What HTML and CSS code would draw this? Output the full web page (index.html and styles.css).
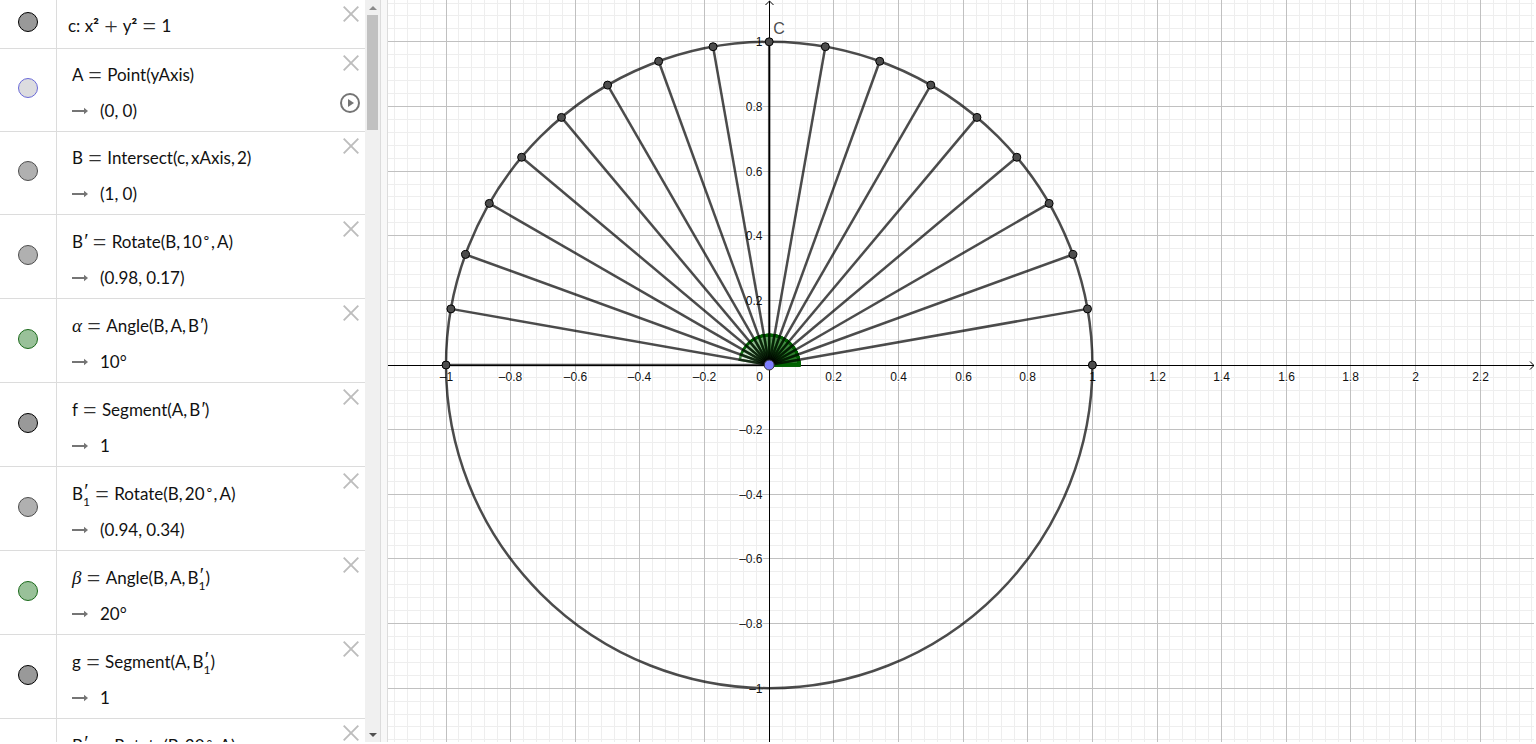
FILE: index.html
```html
<!DOCTYPE html>
<html lang="en">
<head>
<meta charset="utf-8">
<title>Circle and rotated points</title>
<link rel="stylesheet" href="styles.css">
</head>
<body>
<svg class="defs" aria-hidden="true">
  <symbol id="close" viewBox="0 0 16 16"><path d="M.7.7 15.3 15.3M15.3.7.7 15.3" fill="none" stroke="#bdbdbd" stroke-width="1.9"/></symbol>
  <symbol id="arrow" viewBox="0 0 16 8"><path d="M0 4H13" stroke="#757575" stroke-width="2"/><path d="M12 .8 16 4 12 7.2Z" fill="#757575"/></symbol>
</svg>
<div class="app">
  <aside class="algebra">
    <ul class="rows">
      <li class="row single">
        <div class="gutter"><button class="marble dark" aria-label="Show c"></button></div>
        <div class="content"><p class="plain">c: x<b class="square">²</b> <span class="op">+</span> y<b class="square">²</b> <span class="op">=</span> 1</p></div>
        <button class="close" aria-label="Delete c"><svg><use href="#close"/></svg></button>
      </li>
      <li class="row">
        <div class="gutter"><button class="marble blue" aria-label="Show A"></button></div>
        <div class="content"><p class="formula">A <span class="op">=</span> Point(yAxis)</p><p class="output"><svg class="arrow"><use href="#arrow"/></svg>(0, 0)</p></div>
        <button class="close" aria-label="Delete A"><svg><use href="#close"/></svg></button>
        <button class="play" aria-label="Play"><svg viewBox="0 0 20 20"><circle cx="10" cy="10" r="9" fill="none" stroke="#757575" stroke-width="2"/><path d="M8 6 14 10 8 14Z" fill="#757575"/></svg></button>
      </li>
      <li class="row">
        <div class="gutter"><button class="marble gray" aria-label="Show B"></button></div>
        <div class="content"><p class="formula">B <span class="op">=</span> Intersect(c,&thinsp;xAxis,&thinsp;2)</p><p class="output"><svg class="arrow"><use href="#arrow"/></svg>(1, 0)</p></div>
        <button class="close" aria-label="Delete B"><svg><use href="#close"/></svg></button>
      </li>
      <li class="row primed">
        <div class="gutter"><button class="marble gray" aria-label="Show B′"></button></div>
        <div class="content"><p class="formula">B<i class="prime">′</i> <span class="op">=</span> Rotate(B,&thinsp;10<i class="ring">∘</i>,&thinsp;A)</p><p class="output"><svg class="arrow"><use href="#arrow"/></svg>(0.98, 0.17)</p></div>
        <button class="close" aria-label="Delete B′"><svg><use href="#close"/></svg></button>
      </li>
      <li class="row primed">
        <div class="gutter"><button class="marble green" aria-label="Show α"></button></div>
        <div class="content"><p class="formula"><i class="greek">α</i> <span class="op">=</span> Angle(B,&thinsp;A,&thinsp;B<i class="prime">′</i>)</p><p class="output"><svg class="arrow"><use href="#arrow"/></svg>10°</p></div>
        <button class="close" aria-label="Delete α"><svg><use href="#close"/></svg></button>
      </li>
      <li class="row primed">
        <div class="gutter"><button class="marble dark" aria-label="Show f"></button></div>
        <div class="content"><p class="formula">f <span class="op">=</span> Segment(A,&thinsp;B<i class="prime">′</i>)</p><p class="output"><svg class="arrow"><use href="#arrow"/></svg>1</p></div>
        <button class="close" aria-label="Delete f"><svg><use href="#close"/></svg></button>
      </li>
      <li class="row primed">
        <div class="gutter"><button class="marble gray" aria-label="Show B′1"></button></div>
        <div class="content"><p class="formula">B<span class="scripts"><i>′</i><b>1</b></span> <span class="op">=</span> Rotate(B,&thinsp;20<i class="ring">∘</i>,&thinsp;A)</p><p class="output"><svg class="arrow"><use href="#arrow"/></svg>(0.94, 0.34)</p></div>
        <button class="close" aria-label="Delete B′1"><svg><use href="#close"/></svg></button>
      </li>
      <li class="row primed">
        <div class="gutter"><button class="marble green" aria-label="Show β"></button></div>
        <div class="content"><p class="formula"><i class="greek">β</i> <span class="op">=</span> Angle(B,&thinsp;A,&thinsp;B<span class="scripts"><i>′</i><b>1</b></span>)</p><p class="output"><svg class="arrow"><use href="#arrow"/></svg>20°</p></div>
        <button class="close" aria-label="Delete β"><svg><use href="#close"/></svg></button>
      </li>
      <li class="row primed">
        <div class="gutter"><button class="marble dark" aria-label="Show g"></button></div>
        <div class="content"><p class="formula">g <span class="op">=</span> Segment(A,&thinsp;B<span class="scripts"><i>′</i><b>1</b></span>)</p><p class="output"><svg class="arrow"><use href="#arrow"/></svg>1</p></div>
        <button class="close" aria-label="Delete g"><svg><use href="#close"/></svg></button>
      </li>
      <li class="row primed">
        <div class="gutter"><button class="marble gray" aria-label="Show B′2"></button></div>
        <div class="content"><p class="formula">B<span class="scripts"><i>′</i><b>2</b></span> <span class="op">=</span> Rotate(B,&thinsp;30<i class="ring">∘</i>,&thinsp;A)</p><p class="output"><svg class="arrow"><use href="#arrow"/></svg>(0.87, 0.5)</p></div>
        <button class="close" aria-label="Delete B′2"><svg><use href="#close"/></svg></button>
      </li>
    </ul>
    <div class="scrollbar">
      <button class="step" aria-label="Scroll up"><svg viewBox="0 0 8 4"><path d="M0 4 4 0 8 4Z" fill="#8b8b8b"/></svg></button>
      <div class="track"><div class="thumb"></div></div>
      <button class="step" aria-label="Scroll down"><svg viewBox="0 0 8 4"><path d="M0 0 4 4 8 0Z" fill="#505050"/></svg></button>
    </div>
  </aside>
  <div class="splitter"></div>
  <main class="graphics"><svg id="graph" class="graph" role="img" aria-label="Unit circle with radii every ten degrees"></svg></main>
</div>
<script src="graph.js"></script>
</body>
</html>
```
FILE: styles.css
```css
* { box-sizing: border-box; }
body { margin: 0; background: #fff; }
button { padding: 0; border: 0; background: none; display: block; }
p, ul { margin: 0; padding: 0; list-style: none; }
svg { display: block; }
.defs { display: none; }

.app { display: flex; height: 100vh; padding: 0 2px 2px 0; overflow: hidden; }

.algebra { display: flex; flex: 0 0 381px; min-height: 0; border-right: 1px solid #dcdcdc; }
.rows { flex: 1; overflow: hidden; }
.row { position: relative; display: flex; height: 83px; border-bottom: 1px solid #dcdcdc; }
.row.primed { height: 84px; }
.row.single { height: 49px; }

.gutter { flex: 0 0 57px; padding: 29px 0 0 18px; border-right: 1px solid #dcdcdc; }
.primed .gutter { padding-top: 30px; }
.single .gutter { padding-top: 12px; }
.marble { width: 20px; height: 20px; border: 1px solid #4d4d4d; border-radius: 50%; }
.marble.dark { background: #999; border-color: #000; }
.marble.gray { background: #b0b0b0; }
.marble.blue { background: #dcdcdf; border-color: #6a6ad8; }
.marble.green { background: #99c199; border-color: #1b6a1b; }

.content { padding: 8px 0 0 15px; font: 17px/36px Lato, "Open Sans", sans-serif; color: #111; white-space: nowrap; }
.primed .formula { line-height: 37px; }
.single .content { padding-left: 11px; }
.output { display: flex; align-items: center; }
.arrow { width: 16px; height: 8px; margin-right: 12px; }
.content i { font-family: "Liberation Serif", serif; }
.op { margin: 0 1px; font: 24px/1 "Liberation Serif", serif; color: #333; vertical-align: -2px; }
.square { font-weight: 700; }
.greek { font-size: 19px; line-height: 1; }
.content .prime { font-size: 20px; line-height: 1; }
.ring { font-size: 14px; font-style: normal; line-height: 1; vertical-align: 6px; }
.scripts { display: inline-flex; flex-direction: column; vertical-align: middle; }
.scripts i { font-size: 20px; line-height: 12px; }
.scripts b { font-size: 12px; line-height: 9px; font-weight: 400; }

.close { position: absolute; right: 6px; top: 6px; }
.close svg { width: 16px; height: 16px; }
.play { position: absolute; right: 5px; top: 44px; }
.play svg { width: 20px; height: 20px; }

.scrollbar { display: flex; flex-direction: column; width: 15px; background: #f0f0f0; }
.step { display: grid; place-items: center; height: 15px; }
.step svg { width: 8px; height: 4px; }
.track { flex: 1; padding: 0 2px; }
.thumb { height: 115px; background: #c1c1c1; }

.splitter { flex: 0 0 7px; background: #f8f8f8; border-right: 1px solid #dcdcdc; }

.graphics { flex: 1; min-width: 0; }
.graph { width: 100%; height: 100%; }
.minor { stroke: #eee; shape-rendering: crispEdges; }
.major { stroke: #c0c0c0; shape-rendering: crispEdges; }
.axis { stroke: #000; fill: none; }
.tick { font: 12px "Liberation Sans", Arial, sans-serif; fill: #111; stroke: #fff; stroke-width: 2px; paint-order: stroke; }
.shape { fill: none; stroke: #000; stroke-opacity: .7; stroke-width: 2.5px; }
.angle { fill: #006400; fill-opacity: .1; stroke: #006400; stroke-opacity: .7; stroke-width: 2.5px; }
.point { fill: #4d4d4d; stroke: #000; }
.center { fill: #7d7dff; stroke: #333; }
.name { font: 16px "Liberation Sans", Arial, sans-serif; fill: #4d4d4d; stroke: #fff; stroke-width: 2px; paint-order: stroke; }
```
FILE: graph.js
```js
const svg = document.getElementById("graph");
const NS = "http://www.w3.org/2000/svg";
const UNIT = 323.2;
const OX = 381.2;
const OY = 365;
const AXIS_X = Math.floor(OX) + 0.5;
const AXIS_Y = Math.floor(OY) + 0.5;
const ANGLE_RADIUS = 30;

function add(tag, cls, attrs, text) {
  const el = document.createElementNS(NS, tag);
  el.setAttribute("class", cls);
  for (const key in attrs) el.setAttribute(key, attrs[key]);
  if (text !== undefined) el.textContent = text;
  svg.appendChild(el);
}

const polar = (deg, r) => {
  const t = deg * Math.PI / 180;
  return [OX + r * Math.cos(t), OY - r * Math.sin(t)];
};

function draw() {
  svg.replaceChildren();
  const w = svg.clientWidth;
  const h = svg.clientHeight;
  const gx = i => Math.floor(OX + i * UNIT / 25) + 0.5;
  const gy = i => Math.floor(OY - i * UNIT / 25) + 0.5;
  const N = 90;

  for (const major of [false, true]) {
    for (let i = -N; i <= N; i++) {
      if ((i % 5 === 0) !== major) continue;
      const cls = major ? "major" : "minor";
      if (gx(i) > 0 && gx(i) < w) add("line", cls, { x1: gx(i), x2: gx(i), y1: 0, y2: h });
      if (gy(i) > 0 && gy(i) < h) add("line", cls, { x1: 0, x2: w, y1: gy(i), y2: gy(i) });
    }
  }

  const label = i => (i < 0 ? "–" : "") + Math.abs(i * 2) / 10;
  for (let i = -18; i <= 18; i++) {
    const x = gx(i * 5);
    const y = gy(i * 5);
    if (i === 0) {
      add("text", "tick", { x: AXIS_X - 10, y: OY + 16, "text-anchor": "middle" }, "0");
      continue;
    }
    if (x > 20 && x < w - 20) add("text", "tick", { x, y: OY + 16, "text-anchor": "middle" }, label(i));
    if (y > 20 && y < h - 20) add("text", "tick", { x: AXIS_X - 7, y: y + 4, "text-anchor": "end" }, label(i));
  }

  add("path", "axis", { d: `M0 ${AXIS_Y}H${w}M${w - 4} ${AXIS_Y - 4}L${w} ${AXIS_Y}L${w - 4} ${AXIS_Y + 4}` });
  add("path", "axis", { d: `M${AXIS_X} ${h}V1M${AXIS_X - 4} 5L${AXIS_X} 1L${AXIS_X + 4} 5` });

  for (let deg = 10; deg <= 170; deg += 10) {
    const [x, y] = polar(deg, ANGLE_RADIUS);
    add("path", "angle", { d: `M${OX} ${OY}H${OX + ANGLE_RADIUS}A${ANGLE_RADIUS} ${ANGLE_RADIUS} 0 0 0 ${x} ${y}Z` });
  }

  add("circle", "shape", { cx: OX, cy: OY, r: UNIT });
  for (let deg = 10; deg <= 180; deg += 10) {
    const [x, y] = polar(deg, UNIT);
    add("line", "shape", { x1: OX, y1: OY, x2: x, y2: y });
  }
  for (let deg = 0; deg <= 180; deg += 10) {
    const [cx, cy] = polar(deg, UNIT);
    add("circle", "point", { cx, cy, r: 4 });
  }
  add("circle", "center", { cx: OX, cy: OY, r: 5 });
  add("text", "name", { x: OX + 4, y: OY - UNIT - 8 }, "C");
}

draw();
window.addEventListener("resize", draw);
```
